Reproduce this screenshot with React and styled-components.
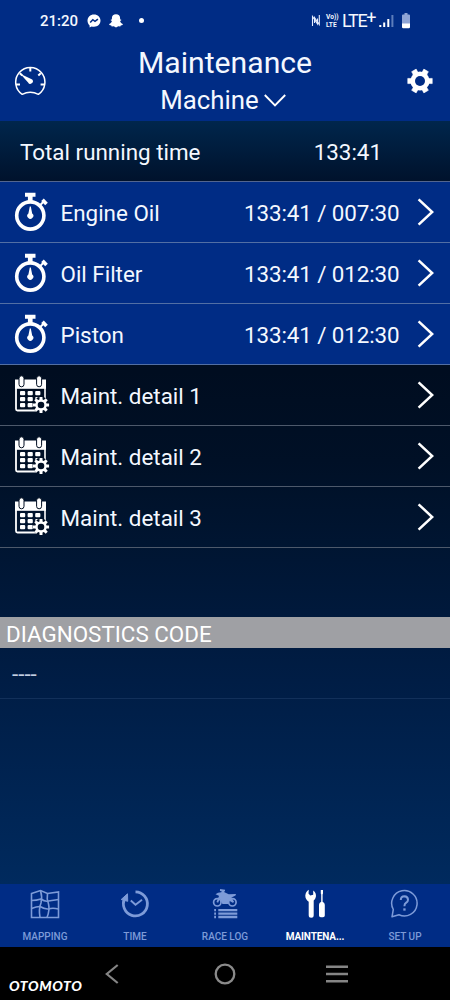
import React from "react";
import styled, { createGlobalStyle } from "styled-components";

const counters = [
  { name: "Engine Oil", value: "133:41 / 007:30" },
  { name: "Oil Filter", value: "133:41 / 012:30" },
  { name: "Piston", value: "133:41 / 012:30" },
];

const details = ["Maint. detail 1", "Maint. detail 2", "Maint. detail 3"];

// Closed path of a cog with straight teeth
const gearPath = (cx, cy, teeth, outer, inner, base, tip, offset = 0) => {
  const points = [];
  for (let i = 0; i < teeth; i++) {
    const a = offset + (i * 2 * Math.PI) / teeth;
    [
      [a - base, inner],
      [a - tip, outer],
      [a + tip, outer],
      [a + base, inner],
    ].forEach(([t, r]) => {
      points.push(
        `${(cx + r * Math.cos(t)).toFixed(2)} ${(cy + r * Math.sin(t)).toFixed(2)}`
      );
    });
  }
  return `M${points.join("L")}Z`;
};

const MessengerIcon = () => (
  <svg width="14" height="14" viewBox="0 0 14 14">
    <path
      d="M7 .5C3.200.5.5 3.200.5 6.800c0 1.900.8 3.500 2.100 4.600v2.100l2-1c.8.2 1.600.3 2.400.3 3.800 0 6.500-2.700 6.500-6.200S10.800.5 7 .5Z"
      fill="#fff"
    />
    <path d="M3.200 8.500 5.800 5.700l2.200 1.700 2.900-2.300" stroke="#002c85" strokeWidth="1.500" fill="none" />
  </svg>
);

const SnapIcon = () => (
  <svg width="14" height="14" viewBox="0 0 14 14">
    <path
      d="M7 .3c2.600 0 4.100 1.600 4.100 3.800v1.500l1-.2.2.8-1.200.9c.3 1.500 1.200 2.400 2.700 2.900l-.2.9-1.900.5-.4 1-2-.1L7 13.500l-2.300-1.200-2 .1-.4-1-1.900-.5-.2-.9c1.500-.5 2.400-1.400 2.700-2.900l-1.200-.9.2-.8 1 .2V4.100C2.900 1.900 4.400.3 7 .3Z"
      fill="#fff"
    />
  </svg>
);

const NfcIcon = () => (
  <svg width="10" height="13" viewBox="0 0 10 13">
    <path
      d="M1.500 12V2.500L6.500 10V4.500M8.300 1v9.500L3.500 3.500V9"
      fill="none"
      stroke="#e8efff"
      strokeWidth="1.100"
    />
  </svg>
);

const SignalIcon = () => (
  <svg width="15" height="14" viewBox="0 0 15 14">
    <path d="M.3 11h2v2h-2zM4.200 8.500h2V13h-2zM8.300 5h2v8h-2z" fill="#fff" />
    <path d="M12.400 1h2v12h-2z" fill="#5c7dbb" />
  </svg>
);

const BatteryIcon = () => (
  <svg width="8" height="16" viewBox="0 0 8 16">
    <path d="M2.500 0h3v1.500H7q1 0 1 1V11H0V2.500q0-1 1-1h1.500z" fill="#8fa5d6" />
    <path d="M0 10.500h8V14q0 1.200-1.200 1.200H1.200Q0 15.200 0 14z" fill="#fff" />
  </svg>
);

const GaugeIcon = () => (
  <svg width="32" height="30" viewBox="0 0 32 30">
    <g fill="none" stroke="#fff" strokeWidth="1.500">
      <path d="M8.200 28.300A14.600 14.600 0 1 1 24.400 28.300Q16.300 24.200 8.200 28.300Z" strokeLinejoin="round" />
      <path d="M16.300 1.500V5.500M1.800 18.500H6M30.800 18.500H26.600M5.800 7.200l2.500 2.300M26.800 7.200l-2.500 2.300" strokeWidth="2" />
    </g>
    <path d="m6.200 7.800 12 5.800a2.500 2.500 0 1 1-4.100 2.800Z" fill="#fff" />
  </svg>
);

const GearIcon = () => (
  <svg width="26" height="26" viewBox="0 0 26 26">
    <path d={gearPath(13, 13, 6, 12.500, 8.500, 0.3, 0.21)} fill="#fff" stroke="#fff" strokeWidth=".6" strokeLinejoin="round" />
    <circle cx="13" cy="13" r="9.600" fill="#fff" />
    <circle cx="13" cy="13" r="5" fill="#002c85" />
  </svg>
);

const StopwatchIcon = () => (
  <svg width="34" height="40" viewBox="0 0 34 40">
    <circle cx="16.300" cy="23.500" r="13.600" fill="none" stroke="#fff" strokeWidth="3.600" />
    <path d="M11 .8h10.500v4H18.600V9h-4.700V4.800H11Z" fill="#fff" />
    <path d="m27.200 9 2.600-2.600 4 4.400-2.600 2.400Z" fill="#fff" />
    <path d="m26.500 12.800 3-3" stroke="#fff" strokeWidth="2" />
    <path d="m15.800 14.500h1l1.400 7a3 3 0 1 1-3.800 0Z" fill="#fff" />
  </svg>
);

const CalendarIcon = () => (
  <svg width="34" height="40" viewBox="0 0 34 40" overflow="visible">
    <path d="M2 5.500V34q0 1.500 1.500 1.500H22" fill="none" stroke="#fff" strokeWidth="1.800" />
    <path d="M31 12v13" stroke="#fff" strokeWidth="1.600" />
    <path d="M1 4.500h31v9.300H1z" fill="#fff" />
    <g fill="#fff" stroke="#000d20" strokeWidth="1">
      <rect x="5" y=".8" width="5" height="11" rx="2.500" />
      <rect x="22.600" y=".8" width="5" height="11" rx="2.500" />
    </g>
    {[16, 22, 28].map((y) =>
      [6, 13.600, 21.200].map((x) => (
        <rect key={`${x}-${y}`} x={x} y={y} width="5.200" height="4.200" rx="1" fill="#fff" />
      ))
    )}
    <circle cx="27" cy="30" r="8.300" fill="#000f24" />
    <path
      d={`${gearPath(27, 30, 8, 8.200, 5.800, 0.27, 0.18)}M30.300 30a3.300 3.300 0 1 0-6.600 0a3.300 3.300 0 1 0 6.600 0Z`}
      fill="#fff"
      fillRule="evenodd"
    />
  </svg>
);

const ChevronRight = () => (
  <svg width="17" height="28" viewBox="0 0 17 28">
    <path d="M1.600 1.300 15.200 14 1.600 26.700" fill="none" stroke="#fff" strokeWidth="2.500" />
  </svg>
);

const ChevronDown = () => (
  <svg width="22" height="13" viewBox="0 0 22 13">
    <path d="M.8 1 11 11.500 21.200 1" fill="none" stroke="#fff" strokeWidth="1.900" />
  </svg>
);

const MapIcon = () => (
  <svg width="30" height="30" viewBox="0 0 30 30">
    <g fill="none" stroke="currentColor" strokeWidth="1.600">
      <path d="M1.500 4.500 10.500 1.500l7 3 11-1.500v25.500h-27Z" />
      <path d="M10.500 1.500Q12.500 8 11 14q-2.500 6-1 14.500M17.500 4.500q-1 5 1 10.500 1.500 6-1.500 13.500" />
      <path d="M1.500 11.500q5 0 9.500-1.500 4 3 7.500 2l10-1.500M1.500 19.500q5-2 8.500-2 5 3 8.500 2.500 4-1.500 10 0" />
    </g>
  </svg>
);

const TimeIcon = () => (
  <svg width="30" height="30" viewBox="0 0 30 30">
    <path d="M4.700 9.500A12 12 0 1 0 15.500 2.900" fill="none" stroke="currentColor" strokeWidth="2.800" />
    <path d="M7.500 4.800 1.200 10.500l6.500 1.800Z" fill="currentColor" stroke="currentColor" />
    <path d="m10.800 11.500 4.700 4.300 6.500-5" fill="none" stroke="currentColor" strokeWidth="1.900" />
  </svg>
);

const RaceIcon = () => (
  <svg width="30" height="30" viewBox="0 0 30 30">
    <g fill="none" stroke="currentColor">
      <circle cx="7.300" cy="13.300" r="3.700" strokeWidth="1.700" />
      <circle cx="22.400" cy="13.300" r="3.700" strokeWidth="1.700" />
      <path d="M7.300 13.300 11 4.500M10 1 15 1.600" strokeWidth="1.800" />
    </g>
    <path
      d="m5.500 5.200 2.500-1.500 3.300-.5.500-1.800 2.400.2-.2 1.500 4.700 2.200 7.300-.3-.5 1.600-4 2 2.700 4.300-1.500.9-3.400-2-.8 3.200h-6l-2.300-4.200-.9-3.700Z"
      fill="currentColor"
    />
    <path d="M4.200 21.200h1.800M4.200 24.600h1.800M4.200 28h1.800M8.300 21.200h19M8.300 24.600h19M8.300 28h19" stroke="currentColor" strokeWidth="2.300" />
  </svg>
);

const ToolsIcon = () => (
  <svg width="30" height="30" viewBox="0 0 30 30">
    <path
      d="M8.800.8 8.500 4.500l1.700 2 3-.8V1.500q3.300 2.500 2.700 6.300-.5 2.500-2.200 3.700v14.800a2.500 2.500 0 0 1-5 0V12.700Q5.300 10.500 5.300 6.500 5.800 2.200 8.800.8Z"
      fill="currentColor"
    />
    <path
      d="m20.800 1h2.200V4.500l-.4 1v7.200q2.200 1 2.200 3v10.800a1.800 1.800 0 0 1-1.800 1.800h-2.200a1.800 1.800 0 0 1-1.800-1.800V15.700q0-2 2.200-3V5.500l-.4-1Z"
      fill="currentColor"
    />
  </svg>
);

const HelpIcon = () => (
  <svg width="30" height="30" viewBox="0 0 30 30">
    <g fill="none" stroke="currentColor">
      <path d="M2 27.800 3.300 20.500A12.700 12.700 0 1 1 9 25.800Z" strokeWidth="1.500" strokeLinejoin="round" />
      <path d="M10.800 11q0-3.600 3.600-3.700 3.500.2 3.600 3.400 0 1.800-1.800 3-1.800 1.200-1.800 3.500" strokeWidth="2" />
      <path d="M13.300 20.500h2.300" strokeWidth="2.300" />
    </g>
  </svg>
);

const tabs = [
  { label: "MAPPING", Icon: MapIcon },
  { label: "TIME", Icon: TimeIcon },
  { label: "RACE LOG", Icon: RaceIcon },
  { label: "MAINTENA...", Icon: ToolsIcon, active: true },
  { label: "SET UP", Icon: HelpIcon },
];

const App = () => {
  return (
    <>
      <GlobalStyle />
      <Screen>
        <StatusBar>
          <Clock>21:20</Clock>
          <MessengerIcon />
          <SnapIcon />
          <Dot />
          <StatusRight>
            <NfcIcon />
            <VoLte>
              <span>Vo))</span>
              <span>LTE</span>
            </VoLte>
            <Network>
              LTE<sup>+</sup>
            </Network>
            <SignalIcon />
            <BatteryIcon />
          </StatusRight>
        </StatusBar>
        <Header>
          <GaugeIcon />
          <Titles>
            <Title>Maintenance</Title>
            <Subtitle>
              Machine <ChevronDown />
            </Subtitle>
          </Titles>
          <GearIcon />
        </Header>
        <Body>
          <TotalRow>
            <span>Total running time</span>
            <span>133:41</span>
          </TotalRow>
          {counters.map((c) => (
            <Row key={c.name} $blue>
              <StopwatchIcon />
              <RowName>{c.name}</RowName>
              <RowValue>{c.value}</RowValue>
              <ChevronRight />
            </Row>
          ))}
          {details.map((d) => (
            <Row key={d}>
              <CalendarIcon />
              <RowName>{d}</RowName>
              <ChevronRight />
            </Row>
          ))}
          <SectionTitle>DIAGNOSTICS CODE</SectionTitle>
          <CodeRow>----</CodeRow>
        </Body>
        <TabBar>
          {tabs.map(({ label, Icon, active }) => (
            <Tab key={label} $active={active}>
              <Icon />
              <span>{label}</span>
            </Tab>
          ))}
        </TabBar>
        <SystemNav>
          <Brand>OTOMOTO</Brand>
          <NavButtons>
            <svg width="14" height="20" viewBox="0 0 14 20">
              <path d="M12.700 1 1.800 10l10.900 9" fill="none" stroke="#858585" strokeWidth="2.200" />
            </svg>
            <svg width="22" height="22" viewBox="0 0 22 22">
              <circle cx="11" cy="11" r="9.300" fill="none" stroke="#8a8a8a" strokeWidth="2.300" />
            </svg>
            <svg width="22" height="18" viewBox="0 0 22 18">
              <path d="M0 1.800h22M0 9h22M0 16.200h22" stroke="#858585" strokeWidth="2.400" />
            </svg>
          </NavButtons>
        </SystemNav>
      </Screen>
    </>
  );
};

const GlobalStyle = createGlobalStyle`
  * {
    box-sizing: border-box;
  }
  body {
    margin: 0;
    background: #000;
    font-family: Roboto, "Liberation Sans", sans-serif;
    color: #f4f8ff;
  }
  svg {
    display: block;
    flex-shrink: 0;
  }
`;

const Screen = styled.div`
  width: 450px;
  height: 1000px;
  display: flex;
  flex-direction: column;
  overflow: hidden;
`;

const StatusBar = styled.div`
  height: 41px;
  display: flex;
  align-items: center;
  padding: 0 40px;
  background: #002c85;
  svg + svg {
    margin-left: 8px;
  }
`;

const Clock = styled.span`
  width: 47px;
  padding-top: 1px;
  font-size: 15px;
  font-weight: 500;
`;

const Dot = styled.i`
  width: 5px;
  height: 5px;
  margin-left: 16px;
  border-radius: 50%;
  background: #fff;
`;

const StatusRight = styled.div`
  margin-left: auto;
  display: flex;
  align-items: center;
`;

const VoLte = styled.div`
  width: 13px;
  margin: 0 3px 0 5px;
  display: flex;
  flex-direction: column;
  font-size: 6.6px;
  line-height: 8px;
  font-weight: 700;
`;

const Network = styled.span`
  width: 35px;
  margin-right: 2px;
  font-size: 18px;
  line-height: 18px;
  letter-spacing: -1.3px;
  white-space: nowrap;
  sup {
    font-size: 18px;
    line-height: 0;
    font-weight: 400;
    vertical-align: 3px;
  }
`;

const Header = styled.header`
  height: 80px;
  display: flex;
  justify-content: space-between;
  align-items: center;
  padding: 0 17px 0 14px;
  background: #002c85;
`;

const Titles = styled.div`
  display: flex;
  flex-direction: column;
  align-items: center;
  padding: 0 3px 1px 0;
`;

const Title = styled.h1`
  margin: 0;
  font-size: 30.2px;
  line-height: 40px;
  font-weight: 400;
`;

const Subtitle = styled.div`
  display: flex;
  align-items: center;
  gap: 5px;
  padding-right: 4px;
  font-size: 25.8px;
  line-height: 35px;
`;

const Body = styled.main`
  flex: 1;
  background: linear-gradient(
    #00264c 0,
    #00122c 60px,
    #000d20 250px,
    #001026 340px,
    #001634 440px,
    #001d45 560px,
    #002a5e 763px
  );
`;

const TotalRow = styled.div`
  height: 61px;
  display: flex;
  align-items: center;
  justify-content: space-between;
  padding: 2px 68px 0 20px;
  border-bottom: 1px solid #52658f;
  font-size: 22.4px;
`;

const Row = styled.div`
  height: 61px;
  display: flex;
  align-items: center;
  padding: 0 16px 0 14px;
  border-bottom: 1px solid ${(props) => (props.$blue ? "#526fa4" : "#4d596b")};
  background: ${(props) => (props.$blue ? "#002c85" : "transparent")};
  font-size: 22.4px;
`;

const RowName = styled.span`
  padding: 1px 0 0 12.5px;
  flex: 1;
`;

const RowValue = styled.span`
  padding-top: 1px;
  margin-right: 17.5px;
  letter-spacing: -0.1px;
`;

const SectionTitle = styled.h2`
  height: 31px;
  margin: 69px 0 0;
  padding: 2px 6px 0;
  background: #9fa0a4;
  color: #fff;
  font-size: 22.4px;
  line-height: 30px;
  font-weight: 400;
`;

const CodeRow = styled.div`
  height: 51px;
  padding-left: 12px;
  border-bottom: 1px solid #12305a;
  color: #c3cfe2;
  font-size: 22.4px;
  line-height: 52px;
`;

const TabBar = styled.nav`
  height: 63px;
  display: flex;
  background: #002c85;
`;

const Tab = styled.div`
  flex: 1;
  display: flex;
  flex-direction: column;
  align-items: center;
  padding-top: 5px;
  color: ${(props) => (props.$active ? "#fff" : "#7d9bd8")};
  font-size: 10px;
  font-weight: ${(props) => (props.$active ? 700 : 500)};
  span {
    margin-top: 12px;
    line-height: 12px;
    letter-spacing: ${(props) => (props.$active ? "-0.1px" : "0")};
  }
`;

const SystemNav = styled.footer`
  height: 53px;
  display: flex;
  background: #000;
`;

const Brand = styled.div`
  width: 105px;
  padding: 31px 0 0 9px;
  color: #fff;
  font-family: Lato, sans-serif;
  font-size: 14px;
  line-height: 16px;
  font-weight: 900;
  font-style: italic;
  letter-spacing: 0.6px;
`;

const NavButtons = styled.div`
  width: 243px;
  display: flex;
  align-items: center;
  justify-content: space-between;
  svg:nth-child(2) {
    margin-left: 4px;
  }
`;

export default App;
